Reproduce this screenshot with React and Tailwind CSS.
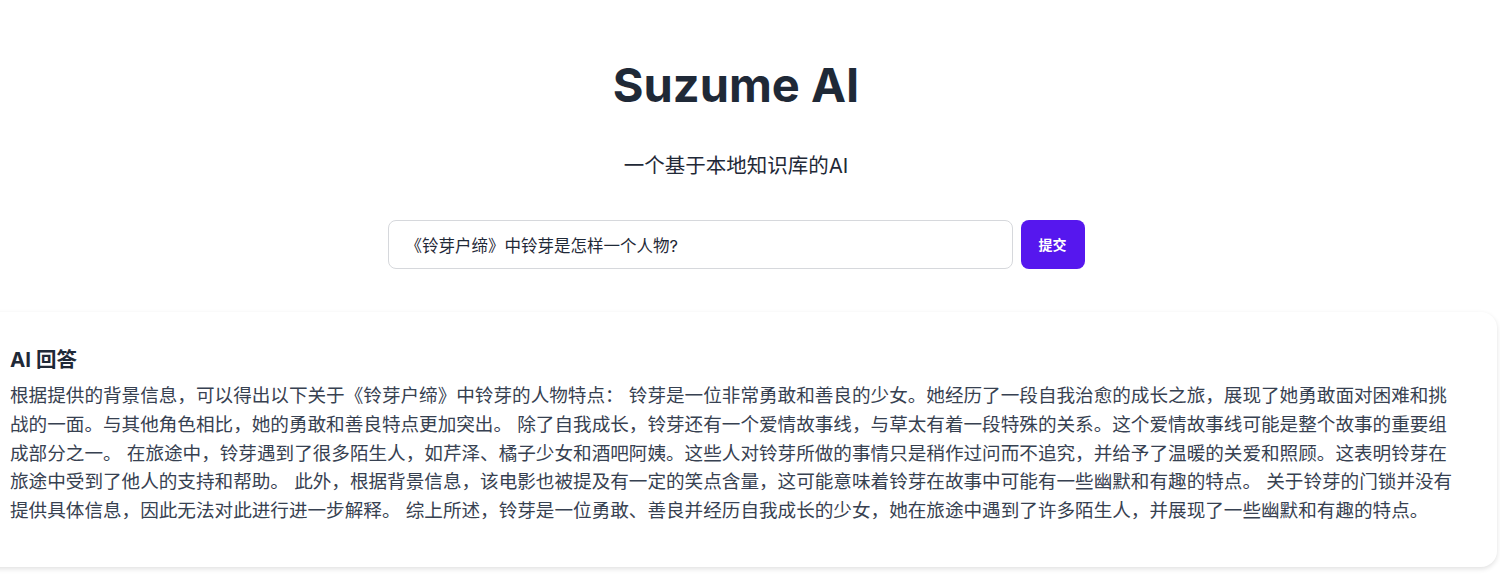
import { useState } from 'react';

const ANSWER =
  '根据提供的背景信息，可以得出以下关于《铃芽户缔》中铃芽的人物特点： 铃芽是一位非常勇敢和善良的少女。她经历了一段自我治愈的成长之旅，展现了她勇敢面对困难和挑战的一面。与其他角色相比，她的勇敢和善良特点更加突出。 除了自我成长，铃芽还有一个爱情故事线，与草太有着一段特殊的关系。这个爱情故事线可能是整个故事的重要组成部分之一。 在旅途中，铃芽遇到了很多陌生人，如芹泽、橘子少女和酒吧阿姨。这些人对铃芽所做的事情只是稍作过问而不追究，并给予了温暖的关爱和照顾。这表明铃芽在旅途中受到了他人的支持和帮助。 此外，根据背景信息，该电影也被提及有一定的笑点含量，这可能意味着铃芽在故事中可能有一些幽默和有趣的特点。 关于铃芽的门锁并没有提供具体信息，因此无法对此进行进一步解释。 综上所述，铃芽是一位勇敢、善良并经历自我成长的少女，她在旅途中遇到了许多陌生人，并展现了一些幽默和有趣的特点。';

const App = () => {
  const [question, setQuestion] = useState('《铃芽户缔》中铃芽是怎样一个人物?');

  return (
    <div className="min-h-screen bg-white overflow-hidden font-['Inter','Noto_Sans_CJK_SC',sans-serif]">

      {/* Header */}
      <div className="w-[1472px] flex flex-col items-center pt-[61px]">
        <h1 className="text-[47px] leading-[48px] font-bold text-[#1f2937]">Suzume AI</h1>
        <p className="mt-[43px] text-[20.5px] leading-[28px] text-[#1f2937]">一个基于本地知识库的AI</p>

        {/* Search */}
        <div className="mt-[40px] flex items-center gap-2">
          <input
            value={question}
            onChange={(e) => setQuestion(e.target.value)}
            className="w-[625px] h-[49px] px-[17px] rounded-lg border border-[#d6d8dc] text-[16.5px] text-[#1f2937] outline-none"
          />
          <button className="w-[64px] h-[49px] rounded-lg bg-[#5617ee] text-white text-[14px] font-bold">
            提交
          </button>
        </div>
      </div>

      {/* Answer card */}
      <div className="mt-[43px] -ml-[23px] w-[1520px] bg-white rounded-2xl shadow-[0_2px_5px_rgba(0,0,0,0.12)] pt-[33px] pl-[33px] pr-[39px] pb-[42px]">
        <h2 className="text-[20.5px] leading-[29px] font-bold text-[#1f2937] mb-[7px]">AI 回答</h2>
        <p className="text-[18.6px] leading-[28.8px] text-[#374151]">{ANSWER}</p>
      </div>
    </div>
  );
};

export default App;
